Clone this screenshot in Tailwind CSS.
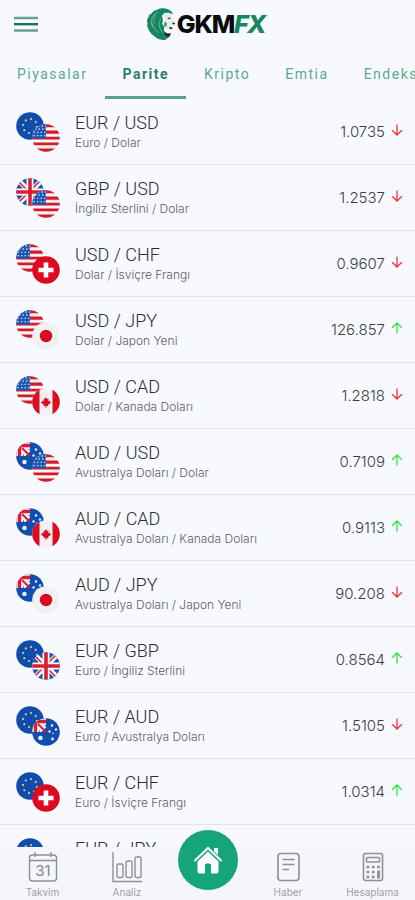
<!DOCTYPE html>
<html lang="tr">
<head>
<meta charset="utf-8">
<meta name="viewport" content="width=device-width, initial-scale=1">
<title>GKMFX</title>
<script src="https://cdn.jsdelivr.net/npm/@tailwindcss/browser@4"></script>
</head>
<body class="flex h-screen flex-col overflow-hidden bg-[#f8f9fe] font-['Inter',sans-serif]">

<svg width="0" height="0" class="absolute" aria-hidden="true">
  <defs>
    <clipPath id="disc"><circle cx="14" cy="14" r="13.8"/></clipPath>
    <symbol id="EUR" viewBox="0 0 28 28">
      <circle cx="14" cy="14" r="13.8" fill="#0f4cad"/>
      <circle cx="14" cy="14" r="7" fill="none" stroke="#d8cf6a" stroke-width="2" stroke-dasharray="1.8 3.698"/>
    </symbol>
    <symbol id="USD" viewBox="0 0 28 28">
      <g clip-path="url(#disc)">
        <path fill="#f5f2f4" d="M0 0h28v28H0z"/>
        <path fill="#d31c2b" d="M0 0h28v3.2H0zM0 6.500h28v3.200H0zM0 12.800h28v2.600H0zM0 18.500h28v2.800H0zM0 24.600h28V28H0z"/>
        <path fill="#1d57b5" d="M0 0h14v14.500H0z"/>
        <path stroke="#b9d0ee" stroke-width="1.300" stroke-dasharray="1.500 2" d="M3 5h11M1.500 8.300h12M1.500 11.600h12M6 2h8"/>
      </g>
    </symbol>
    <symbol id="GBP" viewBox="0 0 28 28">
      <g clip-path="url(#disc)">
        <path fill="#1c51ae" d="M0 0h28v28H0z"/>
        <path stroke="#fff" stroke-width="5" d="M2 2l24 24M26 2L2 26"/>
        <path stroke="#d81f30" stroke-width="1.600" d="M2 3l24 24M26 1L2 25"/>
        <path stroke="#fff" stroke-width="7" d="M14 0v28M0 14h28"/>
        <path stroke="#d81f30" stroke-width="3.600" d="M14 0v28M0 14h28"/>
      </g>
    </symbol>
    <symbol id="CHF" viewBox="0 0 28 28">
      <circle cx="14" cy="14" r="13.8" fill="#dc0920"/>
      <path stroke="#fff" stroke-width="4.600" d="M14 6.500v15M6.500 14h15"/>
    </symbol>
    <symbol id="JPY" viewBox="0 0 28 28">
      <circle cx="14" cy="14" r="13.8" fill="#f1f0f2"/>
      <circle cx="14" cy="14" r="6.200" fill="#d90a22"/>
    </symbol>
    <symbol id="CAD" viewBox="0 0 28 28">
      <g clip-path="url(#disc)">
        <path fill="#f2f0f2" d="M0 0h28v28H0z"/>
        <path fill="#dc0c22" d="M0 0h7.500v28H0zM20.500 0H28v28h-7.500z"/>
        <path fill="#dc0c22" d="M14 9l1.300 2.200 1.300-.6-.4 2.600 2-.8-.3 1.300 1.200.8-3.100 2.400.3 1.300-1.900-.3V20h-.8v-2.100l-1.900.3.300-1.300-3.100-2.400 1.200-.8-.3-1.300 2 .8-.4-2.600 1.300.6z"/>
      </g>
    </symbol>
    <symbol id="AUD" viewBox="0 0 28 28">
      <g clip-path="url(#disc)" fill="none">
        <path fill="#124ead" d="M0 0h28v28H0z"/>
        <path fill="#f5f3f6" d="M0 0h14v14H0z"/>
        <path stroke="#dc1b2e" stroke-width="3.400" d="M14 3.500H3.500V14"/>
        <path fill="#124ead" d="M14 9.500V14H9.500zM14 7v1L11.500 7zM7 14h1L7 11.500z"/>
        <path stroke="#dc1b2e" stroke-width="1.800" d="M6 6l8 8"/>
        <g fill="#e4edfa">
          <circle cx="8.500" cy="20" r="2.300"/>
          <circle cx="20" cy="7.500" r="1.300"/>
          <circle cx="24" cy="11.500" r="1.200"/>
          <circle cx="17.500" cy="13.500" r="1.200"/>
          <circle cx="21" cy="15.500" r=".8"/>
          <circle cx="20.500" cy="21" r="1.400"/>
        </g>
      </g>
    </symbol>
    <symbol id="down" viewBox="0 0 12 12"><path fill="none" stroke="#f5333b" stroke-width="1.300" d="M6 .5v10.500M1.200 6.200L6 11l4.800-4.800"/></symbol>
    <symbol id="up" viewBox="0 0 12 12"><path fill="none" stroke="#2ee63c" stroke-width="1.300" d="M6 11.500V1M1.200 5.800L6 1l4.800 4.800"/></symbol>
  </defs>
</svg>

<header class="grid h-12 shrink-0 grid-cols-[1fr_auto_1fr] items-center">
  <button type="button" aria-label="Menü" class="ml-3.5 w-6">
    <svg viewBox="0 0 24 16" class="h-4 w-6"><path stroke="#6a9f90" stroke-width="2.400" d="M0 2h24M0 14.500h24"/><path stroke="#197454" stroke-width="2.400" d="M0 8.200h24"/></svg>
  </button>
  <a href="#" class="flex items-center gap-px pr-1">
    <svg viewBox="0 0 30 34" class="h-[34px] w-[30px]" aria-hidden="true">
      <path fill="#16875f" d="M14 1.500C18 .5 23 1.500 26 5l.8 2.200-4-1.400-4.600.2-2.400 3 1.300 3.800-1 4.300 2.300 2.300-.4 4.300 2.600 3.200 3.400 1.400-1.300 2.300-4.200 2.600-3-.5-3.500-.8-3-2.200-3.500-2.600-2.600-3.600L1.200 19l.3-2-.6-4.200 1-1L3 8l1.800-1L8 3.700l2.300-.6z"/>
      <path fill="none" stroke="#8cc7b1" stroke-width=".7" d="M12 4.500c-4 3-5 7-3.500 12M8.500 7c-3.500 4-4 8-.5 14M14.500 12c-2 5-1.500 9 2 13.500M5 15c.5 4 3 7 7.500 10.500"/>
      <path fill="#e3eeec" d="M17.500 7l4-1.200 4 1.500 1.200 4.200 2.500 4.600-.8 2.200-2.400.6-.9 3.300-2.700 1.300-3-3.300-1.200-3.500.7-4.200z"/>
      <path fill="#202b2b" d="M21.500 10.500l3.300.6-.6 1-2.200-.3zM26.300 15.500l2.800.5-.5 1.500-1.900-.3zM23.300 20l3.400.6-.8 1.600-2.300-.4zM18.500 25l3 1.500 3.500-.3-1.200 3-2.200.8-3-2z"/>
      <path fill="#2c8f6c" d="M18.500 14.500l2.500 2-.8 3.500-2-1.500z"/>
    </svg>
    <span class="text-[25px] leading-8 font-extrabold tracking-tighter text-[#070b0c]">GKM<em class="text-[#16875f]">FX</em></span>
  </a>
  <span></span>
</header>

<nav class="flex h-[51px] shrink-0 gap-px overflow-hidden font-[Roboto,sans-serif] text-sm tracking-[1.5px] text-[#5aab90]" aria-label="Kategoriler">
  <a href="#" class="px-[17px] pt-4">Piyasalar</a>
  <a href="#" class="border-b-3 border-[#5a9f8a] px-[17px] pt-4 font-bold text-[#2c7f65]" aria-current="page">Parite</a>
  <a href="#" class="px-[17px] pt-4">Kripto</a>
  <a href="#" class="px-[17px] pt-4">Emtia</a>
  <a href="#" class="px-[17px] pt-4">Endeks</a>
</nav>

<main class="min-h-0 flex-1 overflow-y-auto [scrollbar-width:none]">
  <ul id="pairs"></ul>
</main>

<nav class="grid h-[53px] shrink-0 grid-cols-[85fr_84fr_77fr_84fr_85fr] bg-[#f5f6fb] text-[10px] leading-3 text-[#a0a1a5]" aria-label="Alt menü">
  <a href="#" class="flex flex-col items-center gap-[3px] pt-1">
    <svg viewBox="0 0 30 32" class="h-8 w-[30px]" fill="none" stroke="#8f9094" stroke-width="1.400"><rect x="1.500" y="4" width="27" height="26" rx="3"/><path d="M2 9.500h26M7 1v5M23 1v5"/><text x="15" y="25" text-anchor="middle" font-family="Inter, sans-serif" font-size="15" fill="#85868a" stroke="none">31</text></svg>
    Takvim
  </a>
  <a href="#" class="flex flex-col items-center gap-[3px] pt-1">
    <svg viewBox="0 0 30 32" class="h-8 w-[30px]" fill="none" stroke="#8f9094" stroke-width="1.400"><path d="M1 1v29.500h29"/><rect x="5" y="13" width="6" height="13.500" rx="1.500"/><rect x="14" y="10" width="6" height="16.500" rx="1.500"/><rect x="23" y="6" width="6" height="20.500" rx="1.500"/></svg>
    Analiz
  </a>
  <a href="#" aria-label="Ana sayfa" class="-mt-[17px] flex size-[60px] items-center justify-center justify-self-center rounded-full bg-[#16a57a]">
    <svg viewBox="0 0 30 28" class="h-7 w-[30px]"><path fill="none" stroke="#fff" stroke-width="2" stroke-linecap="round" stroke-linejoin="round" d="M2 14.500L15 2l13 12.500"/><path fill="#fff" d="M21 2h4v7l-4-3.700zM15 5.500l10.500 10V25a2.500 2.500 0 0 1-2.500 2.500h-5V19a1.500 1.500 0 0 0-1.500-1.500h-3A1.500 1.500 0 0 0 12 19v8.500H7A2.500 2.500 0 0 1 4.500 25v-9.500z"/></svg>
  </a>
  <a href="#" class="flex flex-col items-center gap-[3px] pt-1">
    <svg viewBox="0 0 30 32" class="h-8 w-[30px]" fill="none" stroke="#8f9094" stroke-width="1.600"><rect x="5" y="2.500" width="21" height="27" rx="3"/><path d="M9.500 8.500h12M9.500 13.500h12M9.500 18.500h6.500"/></svg>
    Haber
  </a>
  <a href="#" class="flex flex-col items-center gap-[3px] pt-1">
    <svg viewBox="0 0 30 32" class="h-8 w-[30px]" fill="none" stroke="#8f9094" stroke-width="1.600"><rect x="5.500" y="2.500" width="19" height="27" rx="2"/><rect x="8.500" y="6.500" width="13" height="4.500" rx="1"/><path stroke-width="2.600" stroke-dasharray="2.800 2.500" d="M8.500 16h13.500M8.500 21h8M8.500 26h8"/><path stroke-width="2.800" d="M20.500 19.500v8"/></svg>
    Hesaplama
  </a>
</nav>

<script>
const pairs = [
  ["EUR", "USD", "Euro / Dolar", "1.0735", "down"],
  ["GBP", "USD", "İngiliz Sterlini / Dolar", "1.2537", "down"],
  ["USD", "CHF", "Dolar / İsviçre Frangı", "0.9607", "down"],
  ["USD", "JPY", "Dolar / Japon Yeni", "126.857", "up"],
  ["USD", "CAD", "Dolar / Kanada Doları", "1.2818", "down"],
  ["AUD", "USD", "Avustralya Doları / Dolar", "0.7109", "up"],
  ["AUD", "CAD", "Avustralya Doları / Kanada Doları", "0.9113", "up"],
  ["AUD", "JPY", "Avustralya Doları / Japon Yeni", "90.208", "down"],
  ["EUR", "GBP", "Euro / İngiliz Sterlini", "0.8564", "up"],
  ["EUR", "AUD", "Euro / Avustralya Doları", "1.5105", "down"],
  ["EUR", "CHF", "Euro / İsviçre Frangı", "1.0314", "up"],
  ["EUR", "JPY", "Euro / Japon Yeni", "136.180", "up"],
];
document.getElementById("pairs").innerHTML = pairs.map(([base, quote, name, rate, dir]) => `
  <li class="flex h-[66px] items-center border-b border-[#e2e4ea] pl-4 pr-3">
    <span class="grid shrink-0 grid-cols-[16px_28px] grid-rows-[12px_28px]">
      <svg class="size-7"><use href="#${base}"/></svg>
      <svg class="col-start-2 row-start-2 size-7"><use href="#${quote}"/></svg>
    </span>
    <span class="ml-[15px] flex-1">
      <span class="block font-[Roboto,sans-serif] text-lg leading-5 font-light text-[#2b2c30]">${base} / ${quote}</span>
      <span class="block pt-0.5 text-xs leading-4 font-light text-[#5d5e63]">${name}</span>
    </span>
    <span class="text-[15px] leading-5 font-light text-[#3d3e42]">${rate}</span>
    <svg class="mb-1 ml-1.5 size-3"><use href="#${dir}"/></svg>
  </li>`).join("");
</script>
</body>
</html>
